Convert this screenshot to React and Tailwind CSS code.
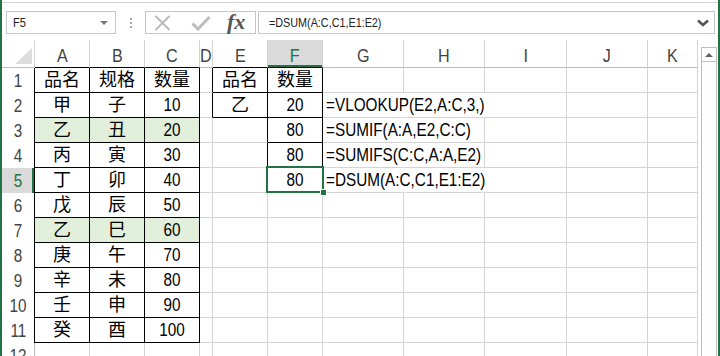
import React from "react";

const COLS = [
  { id: "A", w: "w-[55px]" },
  { id: "B", w: "w-[55px]" },
  { id: "C", w: "w-[55px]" },
  { id: "D", w: "w-[13px]" },
  { id: "E", w: "w-[55px]" },
  { id: "F", w: "w-[55px]" },
  { id: "G", w: "w-[81px]" },
  { id: "H", w: "w-[81px]" },
  { id: "I", w: "w-[82px]" },
  { id: "J", w: "w-[81px]" },
  { id: "K", w: "w-[50px]" },
];

const DATA = {
  1: { A: "品名", B: "规格", C: "数量", E: "品名", F: "数量" },
  2: { A: "甲", B: "子", C: "10", E: "乙", F: "20", G: "=VLOOKUP(E2,A:C,3,)" },
  3: { A: "乙", B: "丑", C: "20", F: "80", G: "=SUMIF(A:A,E2,C:C)" },
  4: { A: "丙", B: "寅", C: "30", F: "80", G: "=SUMIFS(C:C,A:A,E2)" },
  5: { A: "丁", B: "卯", C: "40", F: "80", G: "=DSUM(A:C,C1,E1:E2)" },
  6: { A: "戊", B: "辰", C: "50" },
  7: { A: "乙", B: "巳", C: "60" },
  8: { A: "庚", B: "午", C: "70" },
  9: { A: "辛", B: "未", C: "80" },
  10: { A: "壬", B: "申", C: "90" },
  11: { A: "癸", B: "酉", C: "100" },
  12: {},
};

const ROWS = [1, 2, 3, 4, 5, 6, 7, 8, 9, 10, 11, 12];

// cells that carry a thin black border all round
function boxed(col, row) {
  if (!col) return false;
  if (row >= 1 && row <= 11 && (col === "A" || col === "B" || col === "C")) return true;
  if ((row === 1 || row === 2) && (col === "E" || col === "F")) return true;
  if (row >= 3 && row <= 5 && col === "F") return true;
  return false;
}

// text spilling over from G into H / I hides those grid lines
function hiddenRight(col, row) {
  if (col === "G" && row >= 2 && row <= 5) return true;
  if (col === "H" && (row === 2 || row === 5)) return true;
  return false;
}

// the sheet's latin text is a narrow face; squeeze it, leave CJK alone
function Txt({ children, left }) {
  const latin = /^[\x00-\x7f]+$/.test(String(children));
  if (!latin) return <span className="whitespace-nowrap leading-none">{children}</span>;
  return (
    <span
      className={`inline-block whitespace-nowrap leading-none scale-x-[0.85] ${left ? "origin-left" : "origin-center"}`}
    >
      {children}
    </span>
  );
}

function ColHeader({ col }) {
  const sel = col.id === "F";
  const bottom = boxed(col.id, 1) ? "border-b-black" : "border-b-[#bcbcbc]";
  return (
    <div
      className={`${col.w} shrink-0 h-full flex items-center justify-center pt-[4px] border-r border-b border-r-[#d4d4d4] ${bottom} ${
        sel ? "bg-[#dadada] text-[#217346] shadow-[inset_0_-2px_0_#217346]" : "text-[#444]"
      } text-[19px] leading-none`}
    >
      <Txt>{col.id}</Txt>
    </div>
  );
}

function Cell({ col, next, row }) {
  const value = DATA[row][col.id];
  const green = (row === 3 || row === 7) && (col.id === "A" || col.id === "B" || col.id === "C");
  const right =
    boxed(col.id, row) || boxed(next, row)
      ? "border-r-black"
      : hiddenRight(col.id, row)
      ? "border-r-transparent"
      : "border-r-[#d4d4d4]";
  const bottom = boxed(col.id, row) || boxed(col.id, row + 1) ? "border-b-black" : "border-b-[#d4d4d4]";
  const isFormula = col.id === "G";
  const selected = col.id === "F" && row === 5;

  return (
    <div
      className={`${col.w} shrink-0 h-full relative flex items-center border-r border-b ${right} ${bottom} ${
        green ? "bg-[#e2efda]" : ""
      } ${isFormula ? "justify-start pl-[3px]" : "justify-center"} text-[18px] text-black`}
    >
      {value && <Txt left={isFormula}>{value}</Txt>}
      {selected && (
        <>
          <div className="absolute z-10 left-[-2px] top-[-2px] w-[58px] h-[27px] border-2 border-[#217346]" />
          <div className="absolute z-20 left-[52px] top-[21px] w-[7px] h-[7px] bg-[#217346] border border-white" />
        </>
      )}
    </div>
  );
}

function Row({ row }) {
  const sel = row === 5;
  const right = boxed("A", row) ? "border-r-black" : "border-r-[#bcbcbc]";
  return (
    <div className="flex h-[25px] shrink-0">
      <div
        className={`w-[33px] shrink-0 h-full flex items-center justify-center border-r ${right} text-[18px] leading-none ${
          sel ? "bg-[#dadada] text-[#217346] shadow-[inset_-2px_0_0_#217346]" : "text-[#444]"
        }`}
      >
        <Txt>{row}</Txt>
      </div>
      {COLS.map((c, i) => (
        <Cell key={c.id} col={c} next={COLS[i + 1]?.id} row={row} />
      ))}
    </div>
  );
}

function FormulaBar() {
  return (
    <div className="h-[38px] mt-[2px] border-t border-[#d5d5d5] pt-[8px] flex items-start shrink-0">
      {/* name box */}
      <div className="ml-[4px] w-[110px] h-[23px] border border-[#c6c6c6] flex items-center justify-between pl-[6px] pr-[7px]">
        <span className="inline-block text-[13px] leading-none text-[#222] scale-x-[0.85] origin-left">F5</span>
        <svg width="8" height="4" viewBox="0 0 8 4">
          <path d="M0 0 L8 0 L4 4 Z" fill="#7a7a7a" />
        </svg>
      </div>
      {/* splitter dots */}
      <div className="w-[29px] h-[23px] flex flex-col items-center justify-center gap-[2px]">
        <div className="w-[2px] h-[2px] bg-[#a8a8a8]" />
        <div className="w-[2px] h-[2px] bg-[#a8a8a8]" />
        <div className="w-[2px] h-[2px] bg-[#a8a8a8]" />
      </div>
      {/* cancel / enter / insert function */}
      <div className="w-[111px] h-[23px] border border-[#c6c6c6] flex items-center">
        <svg className="ml-[8px]" width="17" height="16" viewBox="0 0 17 16">
          <path d="M1.5 1 L15.5 15 M15.5 1 L1.5 15" stroke="#b8b8b8" strokeWidth="1.8" fill="none" />
        </svg>
        <svg className="ml-[20px]" width="20" height="16" viewBox="0 0 20 16">
          <path d="M1.5 8.5 L7 14 L18.5 2" stroke="#bdbdbd" strokeWidth="3" fill="none" />
        </svg>
        <span className="ml-[16px] font-['Liberation_Serif',serif] italic text-[22px] leading-none text-[#555] font-semibold -mt-[2px]">
          fx
        </span>
      </div>
      {/* formula input */}
      <div className="ml-[2px] w-[457px] h-[23px] border border-[#c6c6c6] flex items-center justify-between pl-[10px] pr-[5px]">
        <span className="inline-block text-[13px] leading-none text-[#222] whitespace-nowrap scale-x-[0.83] origin-left">
          =DSUM(A:C,C1,E1:E2)
        </span>
        <svg width="12" height="8" viewBox="0 0 12 8">
          <path d="M1 1.5 L6 6 L11 1.5" stroke="#555" strokeWidth="2.6" fill="none" />
        </svg>
      </div>
    </div>
  );
}

export default function App() {
  return (
    <div className="w-[720px] h-[356px] overflow-hidden bg-white flex border-l-2 border-r-2 border-[#217346] font-['Liberation_Sans','Noto_Sans_CJK_SC',sans-serif]">
      <div className="flex-1 flex flex-col min-w-0">
        <FormulaBar />
        <div className="flex flex-1 min-h-0">
          {/* sheet grid */}
          <div className="w-[696px] shrink-0 flex flex-col">
            <div className="flex h-[28px] shrink-0">
              <div className="w-[33px] shrink-0 h-full border-r border-b border-r-[#d4d4d4] border-b-[#bcbcbc] flex items-end justify-end pr-[2px] pb-[3px]">
                <svg width="17" height="16" viewBox="0 0 17 16">
                  <path d="M17 0 L17 16 L0 16 Z" fill="#dcdcdc" />
                </svg>
              </div>
              {COLS.map((c) => (
                <ColHeader key={c.id} col={c} />
              ))}
            </div>
            {ROWS.map((r) => (
              <Row key={r} row={r} />
            ))}
          </div>
          {/* vertical scrollbar */}
          <div className="w-[20px] shrink-0 pl-[3px] pr-[1px] pt-[7px] flex flex-col">
            <div className="flex-1 flex flex-col border-x border-[#bdbdbd]">
              <div className="h-[15px] border-t border-b border-[#bdbdbd] flex items-center justify-center">
                <svg width="8" height="4" viewBox="0 0 8 4">
                  <path d="M0 4 L4 0 L8 4 Z" fill="#606060" />
                </svg>
              </div>
            </div>
          </div>
        </div>
      </div>
    </div>
  );
}
